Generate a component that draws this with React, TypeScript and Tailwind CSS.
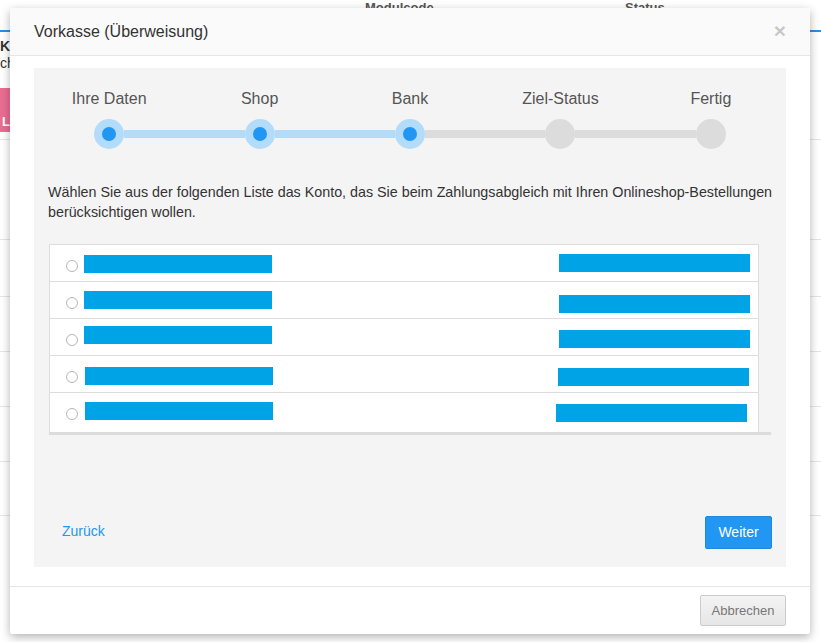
import React from 'react';

const steps = ['Ihre Daten', 'Shop', 'Bank', 'Ziel-Status', 'Fertig'];
const current = 2;

// redacted account rows (offsets taken from the screen)
const accounts = [
  { radio: 'mt-[15px]', left: 'mt-[10px] ml-[6px]', right: 'mt-[9px] mr-[8px]', h: 'h-[37px] border-b' },
  { radio: 'mt-[15px]', left: 'mt-[9px] ml-[6px]', right: 'mt-[13px] mr-[8px]', h: 'h-[37px] border-b' },
  { radio: 'mt-[15px]', left: 'mt-[7px] ml-[6px]', right: 'mt-[11px] mr-[8px]', h: 'h-[37px] border-b' },
  { radio: 'mt-[15px]', left: 'mt-[11px] ml-[7px]', right: 'mt-[12px] mr-[9px]', h: 'h-[37px] border-b' },
  { radio: 'mt-[15px]', left: 'mt-[9px] ml-[7px]', right: 'mt-[11px] mr-[11px]', h: 'h-[39px]' },
];

function Stepper() {
  return (
    <div className="flex">
      {steps.map((label, i) => {
        const done = i <= current;
        return (
          <div key={label} className="flex-1 flex flex-col items-center">
            <div className="text-[16px] leading-[22px] text-[#555]">{label}</div>
            <div className="mt-[9px] flex items-center w-full h-[30px]">
              <div
                className={
                  'flex-1 h-2 ' +
                  (i === 0 ? 'bg-transparent' : i <= current ? 'bg-[#b3dbfa]' : 'bg-[#dcdcdc]')
                }
              ></div>
              <div
                className={
                  'w-[30px] h-[30px] rounded-full flex items-center justify-center ' +
                  (done ? 'bg-[#b3dbfa]' : 'bg-[#dcdcdc]')
                }
              >
                {done && <div className="w-[14px] h-[14px] rounded-full bg-[#2196f3]"></div>}
              </div>
              <div
                className={
                  'flex-1 h-2 ' +
                  (i === steps.length - 1 ? 'bg-transparent' : i < current ? 'bg-[#b3dbfa]' : 'bg-[#dcdcdc]')
                }
              ></div>
            </div>
          </div>
        );
      })}
    </div>
  );
}

function Background() {
  return (
    <div className="w-full h-full text-[13px] text-[#333]">
      <div className="h-[30px] flex text-[#555] font-bold leading-[13px]">
        <div className="w-[365px]"></div>
        <div className="w-[260px] pt-[1px]">Modulcode</div>
        <div className="pt-[1px]">Status</div>
      </div>
      <div className="h-[2px] bg-[#2b8fe0]"></div>
      <div className="h-[108px] border-b border-[#e5e5e5] pt-[6px]">
        <div className="font-bold text-[14px] leading-[16px]">Klarna</div>
        <div className="text-[14px] leading-[18px]">ch</div>
        <div className="mt-[16px] w-[60px] h-[44px] bg-[#ea6d92] text-white font-bold flex items-end pb-[1px] pl-[2px]">
          Lö
        </div>
      </div>
      <div className="h-[100px] border-b border-[#e5e5e5]"></div>
      <div className="h-[57px] border-b border-[#e5e5e5]"></div>
      <div className="h-[55px] border-b border-[#e5e5e5]"></div>
      <div className="h-[55px] border-b border-[#e5e5e5]"></div>
      <div className="h-[55px] border-b border-[#e5e5e5]"></div>
      <div className="h-[54px] border-b border-[#e5e5e5]"></div>
    </div>
  );
}

export default function App() {
  return (
    <div className="relative w-[821px] h-[642px] overflow-hidden bg-white font-['Liberation_Sans',Arial,sans-serif]">
      <Background />

      {/* modal */}
      <div className="absolute left-[10px] top-[8px] w-[800px] h-[626px] bg-white rounded-[2px] shadow-[0_3px_10px_rgba(0,0,0,0.3)] flex flex-col">
        <div className="h-[48px] bg-[#fafafa] border-b border-[#e5e5e5] flex items-center justify-between pl-[24px] pr-[24px] shrink-0">
          <h4 className="text-[16px] text-[#333]">Vorkasse (Überweisung)</h4>
          <button className="text-[21px] font-bold leading-none text-black opacity-20 -mt-[2px]">×</button>
        </div>

        <div className="px-[24px] pt-[12px] pb-[19px]">
          <div className="h-[499px] bg-[#f4f4f4] px-[14px] pt-[20px] pb-[18px] flex flex-col">
            <div className="-mx-[14px]">
              <Stepper />
            </div>

            <p className="mt-[33px] -mr-[12px] text-[14.3px] leading-[20px] text-[#333]">
              Wählen Sie aus der folgenden Liste das Konto, das Sie beim Zahlungsabgleich mit Ihren
              Onlineshop-Bestellungen berücksichtigen wollen.
            </p>

            <div className="mt-[22px] ml-px mr-px border-b-[3px] border-[#dcdcdc]">
              <div className="w-[710px] bg-white border-x border-t border-[#dddddd]">
                {accounts.map((a, i) => (
                  <div key={i} className={'flex items-start border-[#dddddd] ' + a.h}>
                    <div
                      className={
                        'ml-[16px] w-[12px] h-[12px] rounded-full border border-[#b5b5b5] bg-white shrink-0 ' + a.radio
                      }
                    ></div>
                    <div className={'w-[188px] h-[18px] bg-[#00a3e6] ' + a.left}></div>
                    <div className="flex-1"></div>
                    <div className={'w-[191px] h-[18px] bg-[#00a3e6] ' + a.right}></div>
                  </div>
                ))}
              </div>
            </div>

            <div className="mt-auto flex items-center justify-between">
              <a className="ml-[14px] -mt-[2px] text-[14px] text-[#2196f3] cursor-pointer">Zurück</a>
              <button className="w-[67px] h-[33px] bg-[#2196f3] text-white text-[14px] rounded-[2px] border border-[#1c8ae0]">
                Weiter
              </button>
            </div>
          </div>
        </div>

        <div className="mt-auto h-[48px] border-t border-[#e5e5e5] flex items-start justify-end pr-[24px] pt-[8px]">
          <button className="w-[86px] h-[31px] rounded-[2px] border border-[#cccccc] bg-gradient-to-b from-[#f4f4f4] to-[#e6e6e6] text-[13px] text-[#777]">
            Abbrechen
          </button>
        </div>
      </div>
    </div>
  );
}
